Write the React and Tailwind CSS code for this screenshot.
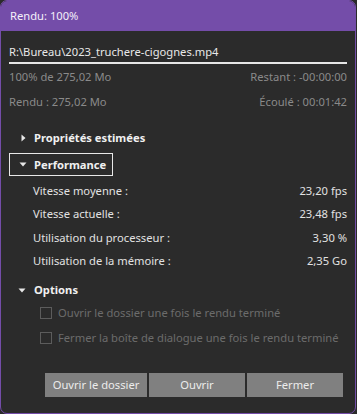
import React from "react";

const F = { fontFamily: '"Noto Sans", "Open Sans", sans-serif' };

function TriRight() {
  return (
    <svg width="5" height="8" viewBox="0 0 5 8" className="block">
      <path d="M0.5 0.5 L4.5 4 L0.5 7.5 Z" fill="#e8e8e8" />
    </svg>
  );
}
function TriDown() {
  return (
    <svg width="8" height="5" viewBox="0 0 8 5" className="block">
      <path d="M0.5 0.5 L7.5 0.5 L4 4.5 Z" fill="#e8e8e8" />
    </svg>
  );
}

function PerfRow({ label, value, mt }) {
  return (
    <div className={`flex h-[16px] items-center justify-between pl-[24px] text-[11.2px] leading-[16px] text-[#e2e2e2] ${mt}`}>
      <span>{label}</span>
      <span>{value}</span>
    </div>
  );
}

function Check({ label, mt }) {
  return (
    <div className={`flex h-[16px] items-center whitespace-nowrap pl-[31px] ${mt}`}>
      <div className="h-[12px] w-[12px] shrink-0 border border-[#5c5c5c]" />
      <span className="ml-[6px] text-[11.2px] leading-[16px] text-[#6c6c6c]">{label}</span>
    </div>
  );
}

export default function App() {
  return (
    <div style={F} className="h-[414px] w-[357px] bg-[#2b2b2b]">
      <div className="flex h-[414px] w-[356px] flex-col overflow-hidden rounded-[7px] border border-[#744da9] bg-[#2b2b2b]">
        <div className="flex h-[30px] shrink-0 items-center bg-[#744da9] pl-[9px] text-[11.2px] text-[#f4f0fa]">
          Rendu: 100%
        </div>
        <div className="flex flex-col pl-[8px] pr-[8px]">
          <div className="mt-[13px] h-[16px] text-[11.2px] leading-[16px] text-[#e8e8e8]">
            R:\Bureau\2023_truchere-cigognes.mp4
          </div>
          <div className="mt-[2px] h-[2px] w-[338px] bg-[#e6e6e6]" />
          <div className="mt-[5px] flex h-[16px] justify-between text-[11.2px] leading-[16px] text-[#8a8a8a]">
            <span>100% de 275,02 Mo</span>
            <span>Restant : -00:00:00</span>
          </div>
          <div className="mt-[9px] flex h-[16px] justify-between text-[11.2px] leading-[16px] text-[#8a8a8a]">
            <span>Rendu : 275,02 Mo</span>
            <span>Écoulé : 00:01:42</span>
          </div>
          <div className="mt-[20px] flex h-[16px] items-center">
            <div className="ml-[12px] w-[13px]"><TriRight /></div>
            <span className="text-[11.2px] font-bold leading-[16px] text-[#f0f0f0]">Propriétés estimées</span>
          </div>
          <div className="mt-[7px] flex h-[23px] w-[104px] items-center border border-[#e8e8e8]">
            <div className="ml-[9px] w-[15px]"><TriDown /></div>
            <span className="text-[11.2px] font-bold leading-[16px] text-[#f0f0f0]">Performance</span>
          </div>
          <PerfRow mt="mt-[7px]" label="Vitesse moyenne :" value="23,20 fps" />
          <PerfRow mt="mt-[7px]" label="Vitesse actuelle :" value="23,48 fps" />
          <PerfRow mt="mt-[8px]" label="Utilisation du processeur :" value="3,30 %" />
          <PerfRow mt="mt-[7px]" label="Utilisation de la mémoire :" value="2,35 Go" />
          <div className="mt-[13px] flex h-[16px] items-center">
            <div className="ml-[9px] w-[16px]"><TriDown /></div>
            <span className="text-[11.2px] font-bold leading-[16px] text-[#f0f0f0]">Options</span>
          </div>
          <Check mt="mt-[7px]" label="Ouvrir le dossier une fois le rendu terminé" />
          <Check mt="mt-[9px]" label="Fermer la boîte de dialogue une fois le rendu terminé" />
          <div className="mt-[27px] flex gap-[2px] pl-[36px]">
            <button className="h-[24px] w-[102px] bg-[#808080] text-[11.2px] text-[#ececec]">Ouvrir le dossier</button>
            <button className="h-[24px] w-[96px] bg-[#808080] text-[11.2px] text-[#ececec]">Ouvrir</button>
            <button className="h-[24px] w-[96px] bg-[#808080] text-[11.2px] text-[#ececec]">Fermer</button>
          </div>
        </div>
      </div>
    </div>
  );
}
